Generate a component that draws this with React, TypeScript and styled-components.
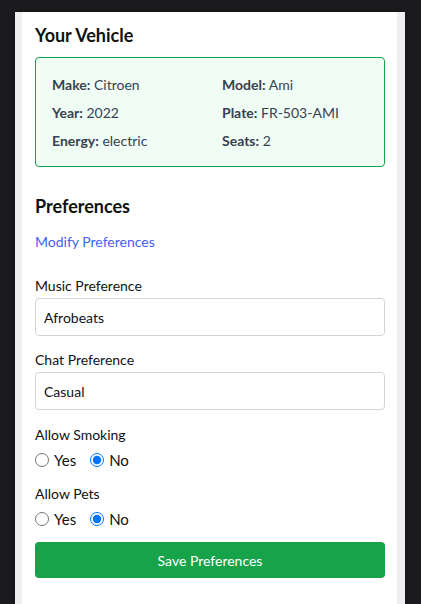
import React, { useState } from "react";
import styled, { createGlobalStyle } from "styled-components";

const Global = createGlobalStyle`
  html, body { margin: 0; padding: 0; background: #1b1b1d; }
  body { font-family: Lato, "Noto Sans", Arial, sans-serif; }
  * { box-sizing: border-box; }
`;

const Frame = styled.div`
  margin: 12px 16px 0 15px;
  background: #efeff1;
  padding: 0 8px 0 7px;
  min-height: 592px;
  box-shadow: 0 0 3px rgba(0,0,0,0.4);
`;

const Panel = styled.div`
  background: #ffffff;
  min-height: 592px;
  padding: 9px 12px 20px 13px;
  display: flex;
  flex-direction: column;
`;

const Heading = styled.h2`
  margin: 0;
  font-size: 18px;
  line-height: 28px;
  font-weight: 700;
  color: #111111;
`;

const VehicleCard = styled.div`
  margin-top: 8px;
  border: 1px solid #16a34a;
  background: #f0fdf4;
  border-radius: 4px;
  padding: 17px 16px 15px 16px;
  display: grid;
  grid-template-columns: 1fr 1fr;
  column-gap: 24px;
  row-gap: 8px;
`;

const Field = styled.div`
  font-size: 14px;
  line-height: 20px;
  color: #374151;
  b { font-weight: 700; }
`;

const Section = styled.div`
  margin-top: 25px;
  display: flex;
  flex-direction: column;
`;

const Link = styled.a`
  margin-top: 12px;
  font-size: 14px;
  line-height: 20px;
  color: #3f63f2;
  text-decoration: none;
  cursor: pointer;
  align-self: flex-start;
`;

const Group = styled.div<{ $gap?: number }>`
  margin-top: ${(p) => p.$gap ?? 16}px;
  display: flex;
  flex-direction: column;
`;

const Label = styled.label`
  font-size: 14px;
  line-height: 20px;
  color: #111111;
  margin-bottom: 2px;
`;

const Input = styled.input`
  height: 38px;
  width: 100%;
  border: 1px solid #d1d5db;
  border-radius: 4px;
  padding: 0 8px;
  font-family: inherit;
  font-size: 14px;
  color: #111111;
  background: #fff;
  outline: none;
`;

const RadioRow = styled.div`
  display: flex;
  gap: 14px;
  margin-top: 2px;
`;

const RadioOption = styled.label`
  display: flex;
  align-items: center;
  gap: 5px;
  font-size: 15px;
  line-height: 22px;
  color: #111111;
  input {
    margin: 0;
    width: 14px;
    height: 14px;
  }
`;

const SaveButton = styled.button`
  margin-top: 12px;
  height: 36px;
  width: 100%;
  border: none;
  border-radius: 4px;
  background: #16a34a;
  color: #ffffff;
  font-family: inherit;
  font-size: 14px;
  cursor: pointer;
`;

function YesNo({ name }: { name: string }) {
  const [v, setV] = useState("no");
  return (
    <RadioRow>
      <RadioOption>
        <input type="radio" name={name} checked={v === "yes"} onChange={() => setV("yes")} />
        Yes
      </RadioOption>
      <RadioOption>
        <input type="radio" name={name} checked={v === "no"} onChange={() => setV("no")} />
        No
      </RadioOption>
    </RadioRow>
  );
}

export default function App() {
  const fields: [string, string][] = [
    ["Make", "Citroen"],
    ["Model", "Ami"],
    ["Year", "2022"],
    ["Plate", "FR-503-AMI"],
    ["Energy", "electric"],
    ["Seats", "2"],
  ];
  return (
    <>
      <Global />
      <Frame>
        <Panel>
          <Heading>Your Vehicle</Heading>
          <VehicleCard>
            {fields.map(([k, v]) => (
              <Field key={k}>
                <b>{k}:</b> {v}
              </Field>
            ))}
          </VehicleCard>
          <Section>
            <Heading>Preferences</Heading>
            <Link>Modify Preferences</Link>
            <Group $gap={24}>
              <Label>Music Preference</Label>
              <Input defaultValue="Afrobeats" />
            </Group>
            <Group $gap={14}>
              <Label>Chat Preference</Label>
              <Input defaultValue="Casual" />
            </Group>
            <Group $gap={15}>
              <Label>Allow Smoking</Label>
              <YesNo name="smoking" />
            </Group>
            <Group $gap={13}>
              <Label>Allow Pets</Label>
              <YesNo name="pets" />
            </Group>
            <SaveButton>Save Preferences</SaveButton>
          </Section>
        </Panel>
      </Frame>
    </>
  );
}
